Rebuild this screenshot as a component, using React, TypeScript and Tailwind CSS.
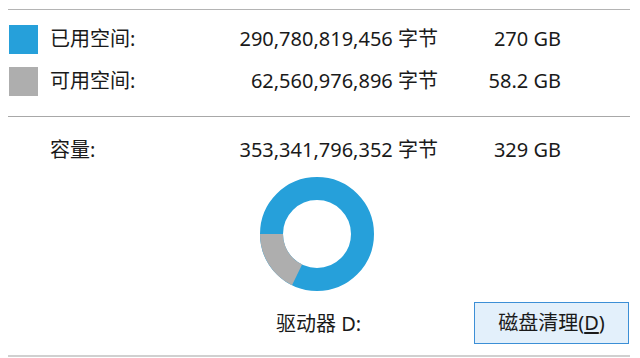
const font = {
  fontFamily: "'Noto Sans', 'Noto Sans CJK SC', sans-serif",
};

function Row({
  swatch,
  label,
  bytes,
  size,
}: {
  swatch?: string;
  label: string;
  bytes: string;
  size: string;
}) {
  return (
    <div className="flex h-[42px] items-center pl-[9px]">
      <div className={`h-[29px] w-[29px] shrink-0 ${swatch ?? ""}`} />

      <div className="ml-[12px] w-[150px]">{label}</div>

      <div className="w-[238px] text-right">{bytes}</div>

      <div className="w-[123px] text-right">{size}</div>
    </div>
  );
}

export default function App() {
  return (
    <main
      className="h-[358px] w-[640px] overflow-hidden bg-white text-[20px] leading-none text-[#1a1a1a]"
      style={font}
    >
      <div className="pt-[9px]">
        {/* top rule */}
        <div className="ml-[8px] h-px w-[622px] bg-[#b4b4b4]" />

        <div className="pt-[8px]">
          <Row
            swatch="bg-[#26a0da]"
            label="已用空间:"
            bytes="290,780,819,456 字节"
            size="270 GB"
          />

          <Row
            swatch="bg-[#aeaeae]"
            label="可用空间:"
            bytes="62,560,976,896 字节"
            size="58.2 GB"
          />
        </div>

        <div className="mt-[14px] ml-[8px] h-px w-[622px] bg-[#a8a8a8]" />

        <div className="pt-[12px]">
          <Row label="容量:" bytes="353,341,796,352 字节" size="329 GB" />
        </div>

        {/* donut */}
        <div className="ml-[260px] mt-[6px] h-[114px] w-[114px]">
          <svg width="114" height="114" viewBox="0 0 114 114">
            <circle
              cx="57"
              cy="57"
              r="45.5"
              fill="none"
              stroke="#26a0da"
              strokeWidth="23"
            />
            <path
              d="M 37.05 97.9 A 45.5 45.5 0 0 1 11.5 57"
              fill="none"
              stroke="#aeaeae"
              strokeWidth="23"
            />
          </svg>
        </div>

        {/* bottom */}
        <div className="mt-[11px] flex h-[42px] items-center">
          <div className="ml-[276px] pt-[2px]">驱动器 D:</div>

          <button className="ml-auto mr-[11px] h-[42px] w-[155px] border border-[#3c8fd6] bg-[#e3f0fb] text-[20px]">
            磁盘清理(<span className="underline underline-offset-2">D</span>)
          </button>
        </div>

        <div className="mt-[11px] ml-[8px] h-[2px] w-[622px] bg-[#d0d0d0]" />
      </div>
    </main>
  );
}
